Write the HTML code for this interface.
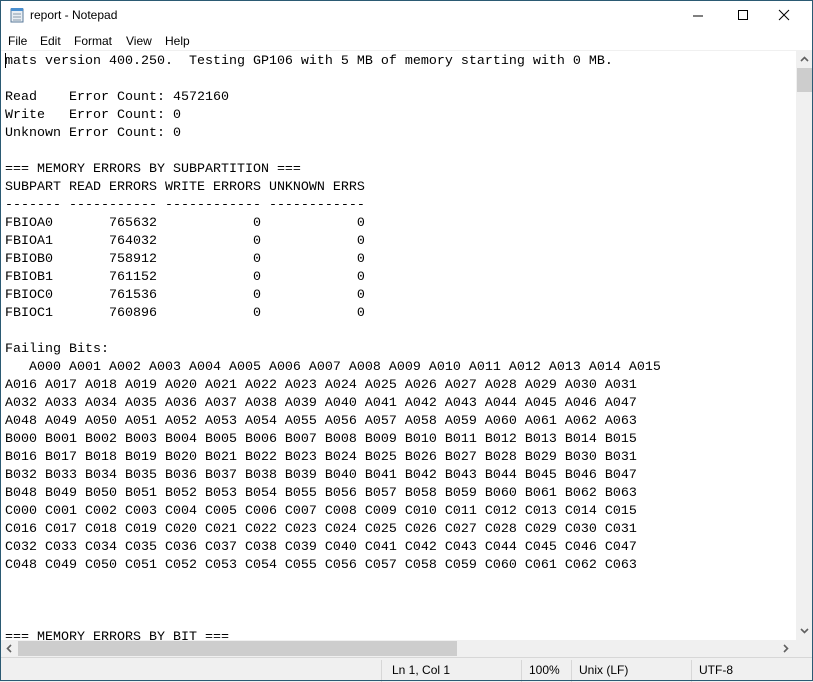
<!DOCTYPE html>
<html><head><style>
body{margin:0;width:813px;height:681px;overflow:hidden;background:#fff;position:relative;font-family:"Liberation Sans",sans-serif;}
.border{position:absolute;left:0;top:0;width:811px;height:679px;border:1px solid #2b5a73;pointer-events:none;z-index:9}
.title{position:absolute;left:0;top:0;width:813px;height:31px;background:#fff}
.title span{position:absolute;left:30px;top:8px;font-size:12px;color:#000}
.menu{position:absolute;left:0;top:31px;height:19px;width:813px;font-size:12px}
.menu span{position:absolute;top:3px}
.sep{position:absolute;left:0;top:50px;width:813px;height:1px;background:#f0f0f0}
pre{position:absolute;left:5px;top:52.5px;margin:0;font-family:"Liberation Mono",monospace;font-size:13.33px;line-height:18px;color:#000;width:790px;height:587px;overflow:hidden}
.vs{position:absolute;left:796px;top:51px;width:17px;height:589px;background:#f0f0f0}
.hs{position:absolute;left:0;top:640px;width:796px;height:17px;background:#f0f0f0}
.corner{position:absolute;left:796px;top:640px;width:17px;height:17px;background:#f0f0f0}
.status{position:absolute;left:0;top:657px;width:813px;height:24px;background:#f0f0f0;border-top:1px solid #d7d7d7;font-size:12px}
.status span{position:absolute;top:5px}
.status i{position:absolute;top:2px;width:1px;height:22px;background:#d7d7d7}
</style></head><body>
<div class="title">
<svg style="position:absolute;left:9px;top:7px" width="16" height="16"><rect x="2" y="2" width="12" height="13" fill="#e8eef4" stroke="#5a7a99"/><rect x="2" y="1" width="12" height="3" fill="#4a90d0"/><line x1="4" y1="7" x2="12" y2="7" stroke="#89a"/><line x1="4" y1="10" x2="12" y2="10" stroke="#89a"/><line x1="4" y1="13" x2="12" y2="13" stroke="#89a"/></svg>
<span>report - Notepad</span>
<svg style="position:absolute;left:690px;top:9px" width="112" height="14"><line x1="3" y1="7" x2="13" y2="7" stroke="#000"/><rect x="48.5" y="1.5" width="9" height="9" fill="none" stroke="#000"/><path d="M89 1 L99 11 M99 1 L89 11" stroke="#000"/></svg>
</div>
<div class="menu"><span style="left:8px">File</span><span style="left:40px">Edit</span><span style="left:74px">Format</span><span style="left:126px">View</span><span style="left:165px">Help</span></div>
<div class="sep"></div>
<pre>mats version 400.250.  Testing GP106 with 5 MB of memory starting with 0 MB.

Read    Error Count: 4572160
Write   Error Count: 0
Unknown Error Count: 0

=== MEMORY ERRORS BY SUBPARTITION ===
SUBPART READ ERRORS WRITE ERRORS UNKNOWN ERRS
------- ----------- ------------ ------------
FBIOA0       765632            0            0
FBIOA1       764032            0            0
FBIOB0       758912            0            0
FBIOB1       761152            0            0
FBIOC0       761536            0            0
FBIOC1       760896            0            0

Failing Bits:
   A000 A001 A002 A003 A004 A005 A006 A007 A008 A009 A010 A011 A012 A013 A014 A015
A016 A017 A018 A019 A020 A021 A022 A023 A024 A025 A026 A027 A028 A029 A030 A031
A032 A033 A034 A035 A036 A037 A038 A039 A040 A041 A042 A043 A044 A045 A046 A047
A048 A049 A050 A051 A052 A053 A054 A055 A056 A057 A058 A059 A060 A061 A062 A063
B000 B001 B002 B003 B004 B005 B006 B007 B008 B009 B010 B011 B012 B013 B014 B015
B016 B017 B018 B019 B020 B021 B022 B023 B024 B025 B026 B027 B028 B029 B030 B031
B032 B033 B034 B035 B036 B037 B038 B039 B040 B041 B042 B043 B044 B045 B046 B047
B048 B049 B050 B051 B052 B053 B054 B055 B056 B057 B058 B059 B060 B061 B062 B063
C000 C001 C002 C003 C004 C005 C006 C007 C008 C009 C010 C011 C012 C013 C014 C015
C016 C017 C018 C019 C020 C021 C022 C023 C024 C025 C026 C027 C028 C029 C030 C031
C032 C033 C034 C035 C036 C037 C038 C039 C040 C041 C042 C043 C044 C045 C046 C047
C048 C049 C050 C051 C052 C053 C054 C055 C056 C057 C058 C059 C060 C061 C062 C063



=== MEMORY ERRORS BY BIT ===</pre>
<div style="position:absolute;left:5px;top:53px;width:1px;height:15px;background:#000"></div>
<div class="vs"><div style="position:absolute;left:1px;top:17px;width:15px;height:24px;background:#cdcdcd"></div>
<svg style="position:absolute;left:4px;top:5px" width="9" height="6"><path d="M1 5 L4.5 1.5 L8 5" stroke="#606060" stroke-width="1.6" fill="none"/></svg>
<svg style="position:absolute;left:4px;top:577px" width="9" height="6"><path d="M1 1 L4.5 4.5 L8 1" stroke="#606060" stroke-width="1.6" fill="none"/></svg></div>
<div class="hs"><div style="position:absolute;left:18px;top:1px;width:439px;height:15px;background:#cdcdcd"></div>
<svg style="position:absolute;left:6px;top:4px" width="6" height="9"><path d="M5 1 L1.5 4.5 L5 8" stroke="#606060" stroke-width="1.6" fill="none"/></svg>
<svg style="position:absolute;left:783px;top:4px" width="6" height="9"><path d="M1 1 L4.5 4.5 L1 8" stroke="#606060" stroke-width="1.6" fill="none"/></svg></div>
<div class="corner"></div>
<div class="status"><i style="left:381px"></i><span style="left:392px">Ln 1, Col 1</span><i style="left:521px"></i><span style="left:529px">100%</span><i style="left:571px"></i><span style="left:579px">Unix (LF)</span><i style="left:691px"></i><span style="left:699px">UTF-8</span></div>
<div class="border"></div>
</body></html>
